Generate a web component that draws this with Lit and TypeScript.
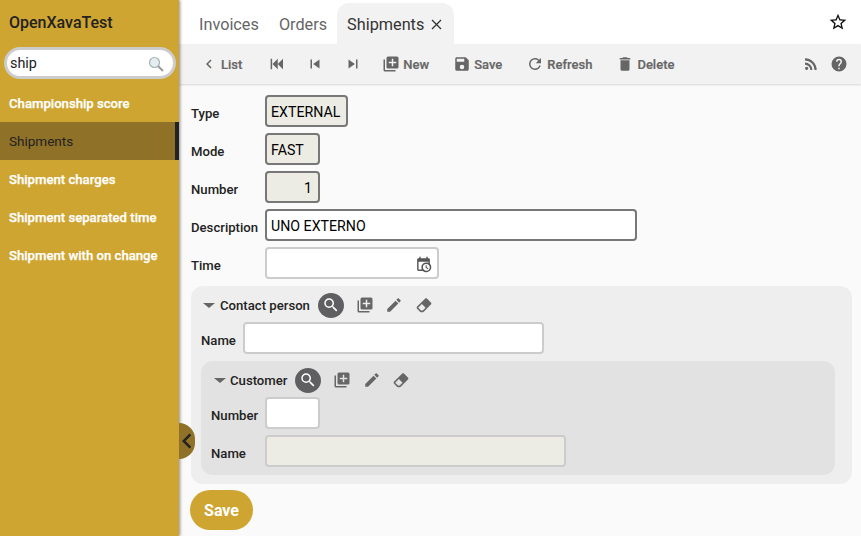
import { LitElement, html, css, svg } from "lit";
import { customElement } from "lit/decorators.js";

const icons = {
  chevron: "M15.41,16.58L10.83,12L15.41,7.41L14,6L8,12L14,18L15.41,16.58Z",
  first: "M20,5V19L13,12L20,5M13,5V19L6,12L13,5M5.5,5V19H3.5V5H5.5Z",
  prev: "M6,18V6H8V18H6M9.5,12L18,6V18L9.5,12Z",
  next: "M16,18H18V6H16M6,18L14.5,12L6,6V18Z",
  plus: "M19,11H15V15H13V11H9V9H13V5H15V9H19M20,2H8A2,2 0 0,0 6,4V16A2,2 0 0,0 8,18H20A2,2 0 0,0 22,16V4A2,2 0 0,0 20,2M4,6H2V20A2,2 0 0,0 4,22H18V20H4V6Z",
  save: "M15,9H5V5H15M12,19A3,3 0 0,1 9,16A3,3 0 0,1 12,13A3,3 0 0,1 15,16A3,3 0 0,1 12,19M17,3H5C3.89,3 3,3.9 3,5V19A2,2 0 0,0 5,21H19A2,2 0 0,0 21,19V7L17,3Z",
  refresh: "M17.65,6.35C16.2,4.9 14.21,4 12,4A8,8 0 0,0 4,12A8,8 0 0,0 12,20C15.73,20 18.84,17.45 19.73,14H17.65C16.83,16.33 14.61,18 12,18A6,6 0 0,1 6,12A6,6 0 0,1 12,6C13.66,6 15.14,6.69 16.22,7.78L13,11H20V4L17.65,6.35Z",
  trash: "M19,4H15.5L14.5,3H9.5L8.5,4H5V6H19M6,19A2,2 0 0,0 8,21H16A2,2 0 0,0 18,19V7H6V19Z",
  rss: "M6.18,15.64A2.18,2.18 0 0,1 8.36,17.82C8.36,19 7.38,20 6.18,20C5,20 4,19 4,17.82A2.18,2.18 0 0,1 6.18,15.64M4,4.44A15.56,15.56 0 0,1 19.56,20H16.73A12.73,12.73 0 0,0 4,7.27V4.44M4,10.1A9.9,9.9 0 0,1 13.9,20H11.07A7.07,7.07 0 0,0 4,12.93V10.1Z",
  help: "M15.07,11.25L14.17,12.17C13.45,12.89 13,13.5 13,15H11V14.5C11,13.39 11.45,12.39 12.17,11.67L13.41,10.41C13.78,10.05 14,9.55 14,9C14,7.89 13.1,7 12,7A2,2 0 0,0 10,9H8A4,4 0 0,1 12,5A4,4 0 0,1 16,9C16,9.88 15.64,10.67 15.07,11.25M13,19H11V17H13M12,2A10,10 0 0,0 2,12A10,10 0 0,0 12,22A10,10 0 0,0 22,12C22,6.47 17.5,2 12,2Z",
  star: "M12,15.39L8.24,17.66L9.23,13.38L5.91,10.5L10.29,10.13L12,6.09L13.71,10.13L18.09,10.5L14.77,13.38L15.76,17.66M22,9.24L14.81,8.63L12,2L9.19,8.62L2,9.24L7.45,13.97L5.82,21L12,17.27L18.18,21L16.54,13.97L22,9.24Z",
  magnify: "M9.5,3A6.5,6.5 0 0,1 16,9.5C16,11.11 15.41,12.59 14.44,13.73L14.71,14H15.5L20.5,19L19,20.5L14,15.5V14.71L13.73,14.44C12.59,15.41 11.11,16 9.5,16A6.5,6.5 0 0,1 3,9.5A6.5,6.5 0 0,1 9.5,3M9.5,5C7,5 5,7 5,9.5C5,12 7,14 9.5,14C12,14 14,12 14,9.5C14,7 12,5 9.5,5Z",
  pencil: "M20.71,7.04C21.1,6.65 21.1,6 20.71,5.63L18.37,3.29C18,2.9 17.35,2.9 16.96,3.29L15.12,5.12L18.87,8.87M3,17.25V21H6.75L17.81,9.93L14.06,6.18L3,17.25Z",
  eraser: "M16.24,3.56L21.19,8.5C21.97,9.29 21.97,10.55 21.19,11.34L12,20.53C10.44,22.09 7.91,22.09 6.34,20.53L2.81,17C2.03,16.21 2.03,14.95 2.81,14.16L13.41,3.56C14.2,2.78 15.46,2.78 16.24,3.56M4.22,15.58L7.76,19.11C8.54,19.9 9.8,19.9 10.59,19.11L14.12,15.58L9.17,10.63L4.22,15.58Z",
  calendar: "M15,13H16.5V15.82L18.94,17.23L18.19,18.53L15,16.69V13M19,8H5V19H9.67C9.24,18.09 9,17.07 9,16A7,7 0 0,1 16,9C17.07,9 18.09,9.24 19,9.67V8M5,21C3.89,21 3,20.1 3,19V5C3,3.89 3.89,3 5,3H6V1H8V3H16V1H18V3H19A2,2 0 0,1 21,5V11.1C22.24,12.36 23,14.09 23,16A7,7 0 0,1 16,23C14.09,23 12.36,22.24 11.1,21H5M16,11.15A4.85,4.85 0 0,0 11.15,16C11.15,18.68 13.32,20.85 16,20.85A4.85,4.85 0 0,0 20.85,16C20.85,13.32 18.68,11.15 16,11.15Z",
};

type IconName = keyof typeof icons;

const icon = (name: IconName, size = 18) => html`<svg
  class="icon"
  width=${size}
  height=${size}
  viewBox="0 0 24 24"
  fill="currentColor"
>
  ${svg`<path d=${icons[name]}></path>`}
</svg>`;

const menu = [
  "Championship score",
  "Shipments",
  "Shipment charges",
  "Shipment separated time",
  "Shipment with on change",
];

@customElement("app-root")
export class AppRoot extends LitElement {
  static styles = css`
    :host {
      display: flex;
      position: relative;
      width: 861px;
      height: 536px;
      overflow: hidden;
      background: #fafafa;
      font-family: Roboto, "Liberation Sans", sans-serif;
      font-size: 13.15px;
      color: #222;
    }

    .icon {
      display: block;
      flex: none;
    }

    /* sidebar */
    .sidebar {
      width: 179px;
      flex: none;
      box-sizing: border-box;
      background: #cfa531;
      box-shadow: 1px 0 3px rgba(0, 0, 0, 0.45);
      z-index: 1;
    }

    .brand {
      height: 47px;
      padding: 13px 0 0 9px;
      box-sizing: border-box;
      font-size: 16px;
      line-height: 19px;
      font-weight: 500;
      color: #222;
    }

    .search {
      display: flex;
      align-items: center;
      justify-content: space-between;
      width: 172px;
      height: 32px;
      margin: 0 0 5px 4px;
      padding: 1px 9px 0 3px;
      box-sizing: border-box;
      background: #fff;
      border: 3px solid #ccc;
      border-radius: 16px;
      font-size: 14.4px;
      color: #222;
    }

    .menu-item {
      height: 38px;
      padding: 1px 0 0 9px;
      box-sizing: border-box;
      line-height: 37px;
      font-weight: 500;
      color: #fff;
      white-space: nowrap;
      -webkit-text-stroke: 0.25px #fff;
    }

    .menu-item.selected {
      background: #8f7128;
      border-right: 4px solid #222;
      color: #222;
      font-size: 13.5px;
      font-weight: 400;
      -webkit-text-stroke: 0;
    }

    .collapse {
      position: absolute;
      left: 179px;
      top: 423px;
      width: 16px;
      height: 36px;
      display: flex;
      align-items: center;
      justify-content: center;
      background: #8f7128;
      border-radius: 0 18px 18px 0;
      color: #222;
      z-index: 2;
    }

    /* content */
    .main {
      flex: 1;
      min-width: 0;
    }

    .tabs {
      display: flex;
      align-items: flex-end;
      height: 44px;
      padding: 0 13px 0 10px;
      background: #fff;
      font-size: 16.25px;
      color: #666;
    }

    .tab {
      display: flex;
      align-items: center;
      gap: 6px;
      height: 41px;
      padding: 1px 10px 0;
      box-sizing: border-box;
    }

    .tab.active {
      background: #f2f2f2;
      border-radius: 12px 12px 0 0;
      color: #333;
      padding-right: 11px;
    }

    .star {
      margin: 0 0 12px auto;
      color: #111;
    }

    .toolbar {
      display: flex;
      align-items: center;
      height: 40px;
      padding: 0 13px 0 22px;
      box-sizing: border-box;
      background: #f2f2f2;
      box-shadow: 0 1px 2px rgba(0, 0, 0, 0.15);
      color: #666;
      font-size: 13px;
      font-weight: 500;
      -webkit-text-stroke: 0.2px #666;
    }

    .action {
      display: flex;
      align-items: center;
      gap: 3px;
      margin-right: 24px;
    }

    .action.back {
      margin-right: 26px;
      margin-left: -1px;
    }

    .nav {
      display: flex;
      gap: 20px;
      margin-right: 20px;
    }

    .toolbar-end {
      display: flex;
      gap: 10px;
      margin-left: auto;
    }

    .form {
      padding: 11px 9px 0 12px;
    }

    .row {
      display: flex;
      align-items: center;
      height: 32px;
      margin-bottom: 6px;
    }

    .row.flush {
      margin-bottom: 0;
    }

    .row.last {
      margin-bottom: 7px;
    }

    label {
      flex: none;
      width: 74px;
      padding-top: 4px;
      font-weight: 500;
      color: #222;
    }

    .form > .row label {
      padding-top: 5px;
    }

    .field {
      display: block;
      height: 32px;
      padding: 0 4px;
      box-sizing: border-box;
      border: 2px solid #ccc;
      border-radius: 4px;
      background: #fff;
      font: 14.2px Roboto, "Liberation Sans", sans-serif;
      color: #000;
      outline: none;
    }

    .form > .row .field {
      padding-top: 2px;
    }

    .field.strong {
      border-color: #777;
    }

    .field.locked {
      background: #ecebe4;
    }

    .w-83 { width: 83px; }
    .w-55 { width: 55px; text-align: left; }
    .w-55.num { text-align: right; padding-right: 6px; }
    .w-372 { width: 372px; }
    .w-301 { width: 301px; }

    .date {
      display: flex;
      align-items: center;
      justify-content: flex-end;
      width: 174px;
      padding-right: 5px;
      color: #555;
    }

    .frame {
      padding: 6px 17px 9px 10px;
      border-radius: 12px;
      background: #eee;
    }

    .frame .frame {
      margin-top: 7px;
      padding: 6px 17px 8px 10px;
      background: #e2e2e2;
    }

    .frame-head {
      display: flex;
      align-items: center;
      height: 26px;
      margin-bottom: 4px;
      margin-left: 2px;
      color: #666;
    }

    .frame .frame .frame-head {
      margin-left: 3px;
    }

    .caret {
      width: 0;
      height: 0;
      margin-right: 5px;
      border: solid transparent;
      border-width: 5px 6px 0;
      border-top-color: #666;
    }

    .frame .frame .caret {
      margin-right: 4px;
    }

    .frame-title {
      margin-right: 8px;
      font-weight: 500;
      color: #222;
    }

    .find {
      display: flex;
      align-items: center;
      justify-content: center;
      width: 26px;
      height: 25px;
      margin-right: 12px;
      border-radius: 50%;
      background: #5f5f62;
      color: #fff;
    }

    .head-icons {
      display: flex;
      gap: 11.5px;
    }

    .name-label {
      width: 42px;
    }

    .inner-label {
      width: 54px;
    }

    .save {
      display: block;
      width: 63px;
      height: 40px;
      margin: 6px 0 0 -1px;
      padding: 0;
      border: 0;
      border-radius: 20px;
      background: #cfa531;
      color: #fff;
      font: 700 16px Roboto, "Liberation Sans", sans-serif;
    }
  `;

  private frameHead(title: string) {
    return html`<div class="frame-head">
      <span class="caret"></span>
      <span class="frame-title">${title}</span>
      <span class="find">${icon("magnify", 18)}</span>
      <span class="head-icons">
        ${icon("plus")} ${icon("pencil")} ${icon("eraser")}
      </span>
    </div>`;
  }

  render() {
    return html`
      <aside class="sidebar">
        <div class="brand">OpenXavaTest</div>
        <div class="search">
          <span>ship</span>
          <svg width="16" height="16" viewBox="0 0 16 16">
            <circle cx="6.5" cy="6.5" r="5" fill="#e4eef2" stroke="#a9b0b3" stroke-width="1.2"></circle>
            <path d="M10.2 10.2 L15 15" stroke="#9a9a9a" stroke-width="2"></path>
          </svg>
        </div>
        ${menu.map(
          (item) =>
            html`<div class="menu-item ${item === "Shipments" ? "selected" : ""}">${item}</div>`
        )}
      </aside>
      <div class="collapse">${icon("chevron", 30)}</div>

      <main class="main">
        <nav class="tabs">
          <div class="tab">Invoices</div>
          <div class="tab">Orders</div>
          <div class="tab active">
            Shipments
            <svg width="13" height="13" viewBox="0 0 13 13">
              <path d="M2 2 L11 11 M11 2 L2 11" stroke="#333" stroke-width="1.3"></path>
            </svg>
          </div>
          <span class="star">${icon("star", 20)}</span>
        </nav>

        <div class="toolbar">
          <span class="action back">${icon("chevron")}List</span>
          <span class="nav">${icon("first")} ${icon("prev")} ${icon("next")}</span>
          <span class="action">${icon("plus")}New</span>
          <span class="action">${icon("save")}Save</span>
          <span class="action">${icon("refresh")}Refresh</span>
          <span class="action">${icon("trash")}Delete</span>
          <span class="toolbar-end">${icon("rss")} ${icon("help")}</span>
        </div>

        <div class="form">
          <div class="row">
            <label>Type</label>
            <input class="field strong locked w-83" readonly value="EXTERNAL" />
          </div>
          <div class="row">
            <label>Mode</label>
            <input class="field strong locked w-55" readonly value="FAST" />
          </div>
          <div class="row">
            <label>Number</label>
            <input class="field strong locked w-55 num" readonly value="1" />
          </div>
          <div class="row">
            <label>Description</label>
            <input class="field strong w-372" value="UNO EXTERNO" />
          </div>
          <div class="row last">
            <label>Time</label>
            <div class="field date">${icon("calendar", 17)}</div>
          </div>

          <section class="frame">
            ${this.frameHead("Contact person")}
            <div class="row flush">
              <label class="name-label">Name</label>
              <input class="field w-301" />
            </div>
            <section class="frame">
              ${this.frameHead("Customer")}
              <div class="row">
                <label class="inner-label">Number</label>
                <input class="field w-55" />
              </div>
              <div class="row flush">
                <label class="inner-label">Name</label>
                <input class="field locked w-301" readonly />
              </div>
            </section>
          </section>

          <button class="save">Save</button>
        </div>
      </main>
    `;
  }
}
